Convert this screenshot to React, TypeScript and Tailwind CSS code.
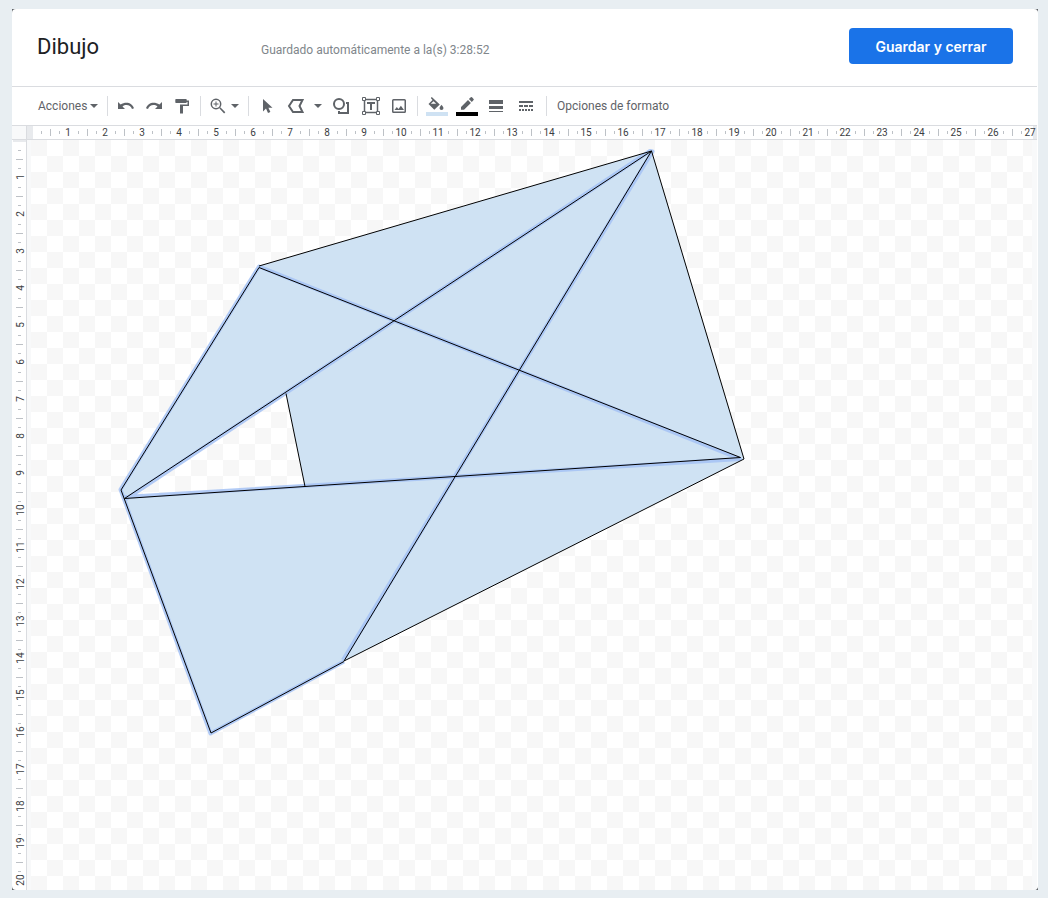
import type { ReactNode } from "react";

const HORIZONTAL_MARKS = Array.from({ length: 27 }, (_, i) => i + 1);
const VERTICAL_MARKS = Array.from({ length: 20 }, (_, i) => i + 1);

function Icon({ children, size = 18 }: { children: ReactNode; size?: number }) {
  return (
    <svg width={size} height={size} viewBox={`0 0 ${size} ${size}`} fill="currentColor" aria-hidden="true" className="shrink-0">
      {children}
    </svg>
  );
}

function Caret() {
  return (
    <svg width="8" height="4" viewBox="0 0 8 4" fill="currentColor" aria-hidden="true" className="shrink-0">
      <path d="M0 0h8L4 4z" />
    </svg>
  );
}

function Tool({ label, width = "w-7", children }: { label: string; width?: string; children: ReactNode }) {
  return (
    <button type="button" aria-label={label} className={`flex h-7 shrink-0 items-center justify-center ${width}`}>
      {children}
    </button>
  );
}

function Separator() {
  return <div className="mx-1 h-5 w-px shrink-0 bg-[#dadce0]" />;
}

function Toolbar() {
  return (
    <div role="toolbar" className="flex h-[39px] shrink-0 items-center overflow-hidden border-b border-[#dadce0] pl-[26px] text-[12px] text-[#5f6368]">
      <button type="button" className="flex w-[65px] shrink-0 items-center gap-[3px]">
        Acciones
        <Caret />
      </button>
      <Separator />
      <Tool label="Deshacer">
        <Icon>
          <path d="M1 5v7h7L5.500 9.500C8.500 7.200 13.500 7.500 15 12l2-.8C15.300 5.500 8.500 4 3.600 7.600z" />
        </Icon>
      </Tool>
      <Tool label="Rehacer">
        <Icon>
          <path d="M17 5v7h-7l2.500-2.500C9.500 7.200 4.500 7.500 3 12l-2-.8C2.700 5.500 9.500 4 14.400 7.600z" />
        </Icon>
      </Tool>
      <Tool label="Copiar formato">
        <Icon>
          <path d="M3 2h10q.7 0 .7.7V3.500H16V9h-6v7.500H7V7.500h7.500V5h-.8v.3q0 .7-.7.7H3q-.7 0-.7-.7V2.700Q2.300 2 3 2z" />
        </Icon>
      </Tool>
      <Separator />
      <button type="button" aria-label="Zoom" className="flex h-7 w-[39px] shrink-0 items-center gap-1 pl-1">
        <Icon>
          <circle cx="7" cy="7" r="4.7" fill="none" stroke="currentColor" strokeWidth="1.5" />
          <path d="M10.3 11.3l1-1 5 5-1.2 1.2zM6.5 4.5h1v2h2v1h-2v2h-1v-2h-2v-1h2z" />
        </Icon>
        <Caret />
      </button>
      <Separator />
      <Tool label="Seleccionar">
        <Icon>
          <path d="M5 2v12.500l3-2.900 2 4.500 2.400-1-2-4.400h4.100z" />
        </Icon>
      </Tool>
      <Tool label="Polilínea" width="w-[30px]">
        <Icon>
          <path d="M6 3h9.500l-3 6 3 6H6L2 9z" fill="none" stroke="currentColor" strokeWidth="2" />
        </Icon>
      </Tool>
      <Tool label="Opciones de línea" width="w-3.5">
        <Caret />
      </Tool>
      <Tool label="Forma" width="w-8">
        <Icon>
          <circle cx="7" cy="7" r="5" fill="none" stroke="currentColor" strokeWidth="2" />
          <path d="M14 5h3v12H6v-3h2v1h7V7h-1z" />
        </Icon>
      </Tool>
      <Tool label="Cuadro de texto">
        <Icon>
          <path d="M2.5 2.5h13v13h-13z" fill="none" stroke="currentColor" strokeWidth="1.5" />
          <path d="M5 5h8v2h-3v6H8V7H5z" />
          <path d="M.5 .5h3v3h-3zM14.500 .5h3v3h-3zM.5 14.500h3v3h-3zM14.500 14.500h3v3h-3z" fill="white" stroke="currentColor" />
        </Icon>
      </Tool>
      <Tool label="Imagen">
        <Icon>
          <rect x="2.750" y="2.750" width="12.500" height="12.500" rx=".8" fill="none" stroke="currentColor" strokeWidth="1.500" />
          <path d="M4.500 13l2.300-3 1.700 2 2.400-3.200L14 13z" />
        </Icon>
      </Tool>
      <Separator />
      <Tool label="Color de relleno" width="w-[30px]">
        <svg width="22" height="20" viewBox="0 0 22 20" fill="currentColor" aria-hidden="true">
          <path fillRule="evenodd" d="M4.800 2l1-1 8 7.500-5.500 5.200L2.500 8l4-4zM7.500 5.200L4.800 7.800h5.400zM15.500 8.700s2 2.300 2 3.400a2 1.900 0 0 1-4 0c0-1.100 2-3.400 2-3.400z" />
          <path d="M0 16h22v4H0z" fill="#cfe2f3" />
        </svg>
      </Tool>
      <Tool label="Color del borde" width="w-[30px]">
        <svg width="22" height="20" viewBox="0 0 22 20" fill="currentColor" aria-hidden="true">
          <path d="M5 10.900L12 4l2.900 2.900L8 13.700H5zM12.900 3.100L14.800 1.300q.6-.5 1.200 0L17.600 2.900q.5.600 0 1.200L15.800 6z" />
          <path d="M0 16h22v4H0z" fill="black" />
        </svg>
      </Tool>
      <Tool label="Grosor del borde">
        <Icon>
          <path d="M2 3h14v4H2zM2 9h14v3H2zM2 14h14v1H2z" />
        </Icon>
      </Tool>
      <Tool label="Guion del borde" width="w-8">
        <Icon>
          <path d="M2 4h14v2H2zM2 8h4v2H2zM7 8h4v2H7zM12 8h4v2h-4zM2 12h2v2H2zM5 12h2v2H5zM8 12h2v2H8zM11 12h2v2h-2zM14 12h2v2h-2z" />
        </Icon>
      </Tool>
      <Separator />
      <button type="button" className="shrink-0 pl-1.5">
        Opciones de formato
      </button>
    </div>
  );
}

function HorizontalRuler() {
  return (
    <div className="flex h-3.5 shrink-0 border-b border-[#dadce0] text-[10px] text-[#3c4043]">
      <div className="w-3.5 shrink-0 bg-[#f8f9fa]" />
      <div className="w-[7px] shrink-0 border-l border-[#dadce0] bg-[#e8eaed]" />
      <div className="flex min-w-0 flex-1 items-center overflow-hidden bg-[linear-gradient(to_left,#e8eaed_4px,transparent_4px)]">
        <div className="ml-2 mr-2 h-[3px] w-px shrink-0 bg-[#bdc1c6]" />
        {HORIZONTAL_MARKS.map((mark) => (
          <div key={mark} className="flex w-[37px] shrink-0 items-center">
            <div className="h-[7px] w-px shrink-0 bg-[#bdc1c6]" />
            <div className="ml-2 h-[3px] w-px shrink-0 bg-[#bdc1c6]" />
            <span className="w-[18px] pr-0.5 text-center leading-3">{mark}</span>
            <div className="h-[3px] w-px shrink-0 bg-[#bdc1c6]" />
          </div>
        ))}
      </div>
    </div>
  );
}

function VerticalRuler() {
  return (
    <div className="flex w-[15px] shrink-0 flex-col items-center overflow-hidden border-r border-[#dadce0] pl-px text-[10px] text-[#3c4043]">
      <div className="h-0.5 w-full shrink-0 bg-[#e8eaed]" />
      <div className="my-2 h-px w-[3px] shrink-0 bg-[#bdc1c6]" />
      {VERTICAL_MARKS.map((mark) => (
        <div key={mark} className="flex h-[37px] shrink-0 flex-col items-center">
          <div className="h-px w-[7px] shrink-0 bg-[#bdc1c6]" />
          <div className="mt-2 h-px w-[3px] shrink-0 bg-[#bdc1c6]" />
          <span className="flex h-[18px] w-3 shrink-0 items-center justify-center pb-0.5 pl-0.5">
            <span className="-rotate-90 leading-3">{mark}</span>
          </span>
          <div className="h-px w-[3px] shrink-0 bg-[#bdc1c6]" />
        </div>
      ))}
    </div>
  );
}

function Drawing() {
  return (
    <svg
      className="absolute top-0 left-0"
      width="730"
      height="600"
      viewBox="27 140 730 600"
      fill="none"
      role="img"
      aria-label="Polígono con líneas cruzadas"
    >
      <path
        d="M259 266L651.500 151L744 459L344 661L211 733L121 490ZM124.500 498.500L305 486.500L286 393.500Z"
        fill="#cfe2f3"
        fillRule="evenodd"
      />
      <path
        d="M343 660L652.500 151.500L650 151L126 499L125 497L740 459L259 266.500L120.500 489.500L210.500 733.500L344 661.500"
        stroke="#a4c2f4"
        strokeOpacity=".85"
        strokeWidth="4"
        strokeLinejoin="round"
      />
      <path
        d="M259 266L651.500 151L744 459L344 661L651.500 151L124.500 498.500L740.500 457.500L259 267.500L121 490L211 733L344 661.500M286 393.500L305 486.500"
        stroke="#000"
        strokeWidth="1"
        strokeLinejoin="round"
      />
    </svg>
  );
}

export default function App() {
  return (
    <div className="flex h-screen bg-[#e8eef2] pt-[9px] pr-2.5 pb-2 pl-3 font-[Roboto,sans-serif]">
      <div className="flex min-w-0 flex-1 bg-[#5f6368]">
        <main className="flex min-w-0 flex-1 flex-col overflow-hidden rounded-[4px] border-r border-white bg-white">
          <header className="flex h-[78px] shrink-0 items-start border-b border-[#dadce0] pr-6 pl-[25px]">
            <h1 className="mt-6 w-56 shrink-0 text-[22px] leading-7 text-[#202124]">Dibujo</h1>
            <p className="mt-[33px] text-[12px] leading-4 whitespace-nowrap text-[#80868b]">Guardado automáticamente a la(s) 3:28:52</p>
            <button
              type="button"
              className="mt-[19px] ml-auto h-9 w-41 shrink-0 rounded-[4px] bg-[#1a73e8] font-[Inter,sans-serif] text-[14px] font-semibold text-white"
            >
              Guardar y cerrar
            </button>
          </header>
          <Toolbar />
          <HorizontalRuler />
          <div className="flex min-h-0 flex-1">
            <VerticalRuler />
            <div className="relative flex min-w-0 flex-1 overflow-hidden bg-[#f8f9fa] pr-[5px] pl-1">
              <div className="flex-1 bg-[repeating-conic-gradient(#fff_0_25%,#f7f7f7_0_50%)] bg-[length:32px_32px]" />
              <Drawing />
            </div>
          </div>
        </main>
      </div>
    </div>
  );
}
